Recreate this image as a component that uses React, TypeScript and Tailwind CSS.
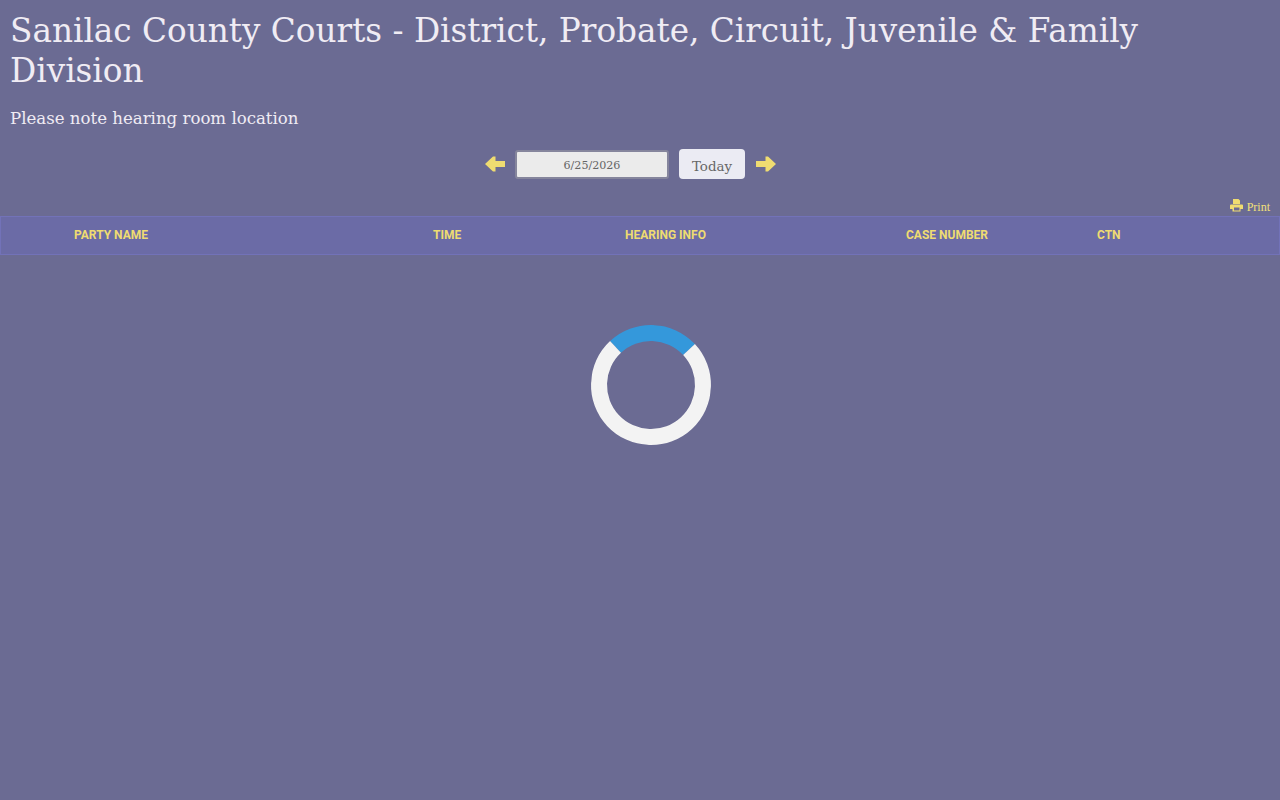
const slab = "font-['DejaVu_Serif',serif]";

function Arrow({ flip }: { flip?: boolean }) {
  return (
    <svg width="20" height="16" viewBox="0 0 20 16" className={flip ? "rotate-180" : ""} aria-hidden>
      <path d="M0 8 8 0.5 10.5 0.5 10.5 5 20 5 20 11 10.5 11 10.5 15.5 8 15.5Z" fill="#efdc71" />
    </svg>
  );
}

function PrinterIcon() {
  return (
    <svg width="13" height="13" viewBox="0 0 13 13" className="-mt-[3px]" aria-hidden>
      <path
        fillRule="evenodd"
        d="M3 0H8.5L10 1.5V5H3ZM1 5.5H12Q13 5.5 13 6.5V10H10.5V12.5H2.5V10H0V6.5Q0 5.5 1 5.5ZM4 8.5V11.5H9.5V8.5Z"
        fill="#efdc71"
      />
    </svg>
  );
}

const columns = [
  { label: "PARTY NAME", width: "w-[359px]" },
  { label: "TIME", width: "w-[192px]" },
  { label: "HEARING INFO", width: "w-[281px]" },
  { label: "CASE NUMBER", width: "w-[191px]" },
  { label: "CTN", width: "w-[100px]" },
];

export default function App() {
  return (
    <div className="min-h-[800px] overflow-hidden bg-[#6b6b93]">
      <div className="px-2.5 pt-[11px]">
        <h1 className={`${slab} text-[32.7px] leading-[40px] text-[#f0ecf4]`}>
          Sanilac County Courts - District, Probate, Circuit, Juvenile &amp; Family Division
        </h1>
        <p className={`${slab} mt-[12px] text-[16.6px] leading-[32px] text-[#f0ecf4]`}>
          Please note hearing room location
        </p>
      </div>

      <div className="mt-[14px] flex h-[30px] items-center justify-center pr-[19px]">
        <Arrow />
        <div className={`${slab} ml-[10px] flex h-[29px] w-[154px] items-center justify-center self-end rounded-[3px] border-2 border-[#85859c] bg-[#ebebeb] pt-1 text-[11.1px] text-[#666666]`}>
          6/25/2026
        </div>
        <div className={`${slab} ml-[10px] flex h-[30px] w-[66px] items-center justify-center rounded-[4px] bg-[#ebebf3] pt-1.5 text-[13.4px] text-[#666666]`}>
          Today
        </div>
        <span className="ml-[11px]">
          <Arrow flip />
        </span>
      </div>

      <div className="mt-[19px] flex h-[18px] items-center justify-end gap-[4px] pr-2.5">
        <PrinterIcon />
        <span className="font-['Liberation_Serif',serif] text-[12px] text-[#f2e07a]">Print</span>
      </div>

      <div className="flex h-[39px] items-center border border-[#7272b8] bg-[#6b6ba6] pb-px pl-[73px] font-['Roboto',sans-serif] text-[12px] font-bold text-[#efdc71]">
        {columns.map((c) => (
          <div key={c.label} className={c.width}>
            {c.label}
          </div>
        ))}
      </div>

      <div className="ml-[591px] mt-[70px] size-[120px] rotate-[2deg] rounded-full border-[16px] border-[#f3f3f3] border-t-[#3498db]" />
    </div>
  );
}
